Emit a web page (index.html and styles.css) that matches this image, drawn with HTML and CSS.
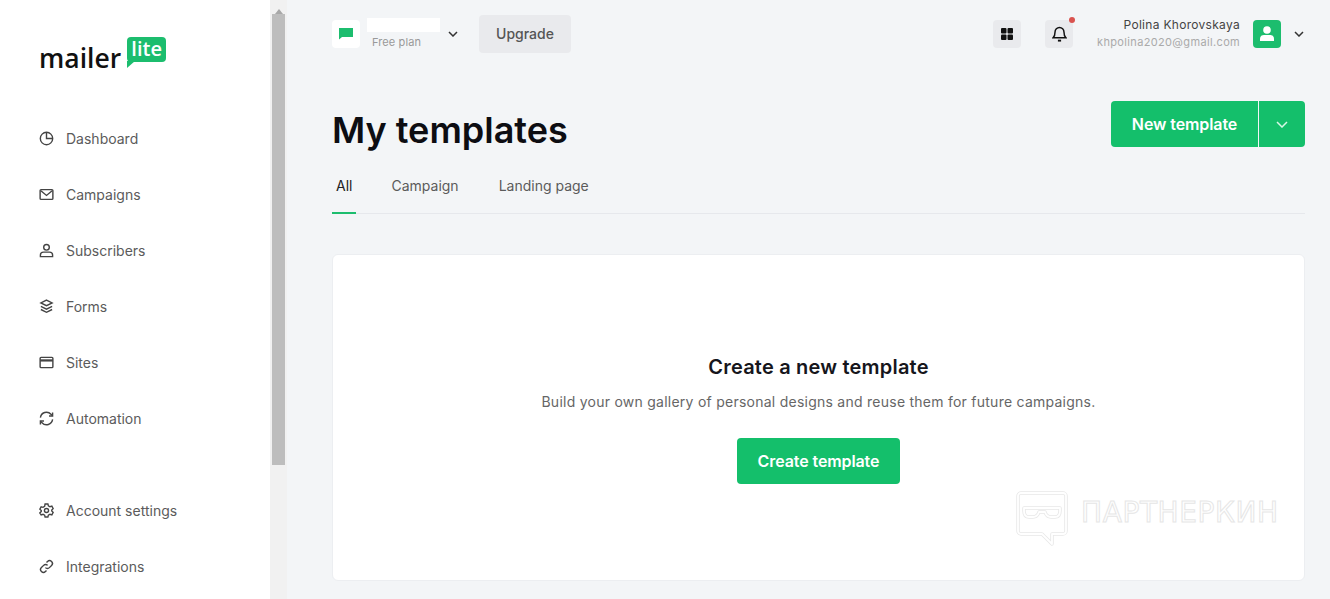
FILE: index.html
```html
<!DOCTYPE html>
<html lang="en">
<head>
    <meta charset="UTF-8">
    <meta name="viewport" content="width=device-width, initial-scale=1.0">
    <title>MailerLite - My templates</title>
    <link rel="stylesheet" href="styles.css">
</head>
<body>

    <!-- Sidebar -->
    <aside class="sidebar">
        <div class="logo">
            <span class="logo-word">mailer</span>
            <span class="logo-badge">lite<svg class="logo-tail" width="8" height="7" viewBox="0 0 8 7"><path d="M0 0h8L0 7z" fill="#1cbd6e"/></svg></span>
        </div>
        <nav class="side-nav">
            <a href="#"><svg class="nav-icon" viewBox="0 0 16 16"><circle cx="8" cy="8" r="6.600"/><path d="M8 1.400V8h6.600"/></svg>Dashboard</a>
            <a href="#"><svg class="nav-icon" viewBox="0 0 16 16"><rect x="1.200" y="2.800" width="13.600" height="10.400" rx="1"/><path d="M2 4l6 5 6-5"/></svg>Campaigns</a>
            <a href="#"><svg class="nav-icon" viewBox="0 0 16 16"><circle cx="8" cy="4.600" r="3"/><path d="M1.500 14.500v-1.800c0-2 1.800-3 3.300-3h6.400c1.500 0 3.300 1 3.300 3v1.800z"/></svg>Subscribers</a>
            <a href="#"><svg class="nav-icon" viewBox="0 0 16 16"><path d="M8 1.200l6 3-6 3-6-3z"/><path d="M2 7.800l6 3 6-3"/><path d="M2 11.200l6 3 6-3"/></svg>Forms</a>
            <a href="#"><svg class="nav-icon" viewBox="0 0 16 16"><rect x="1.200" y="2.500" width="13.600" height="11" rx="1"/><path d="M1.200 5.800h13.600" stroke-width="2.400"/></svg>Sites</a>
            <a class="nav-last" href="#"><svg class="nav-icon" viewBox="0 0 16 16"><path d="M1.500 7A6.500 6.500 0 0 1 12.800 3.500L14.500 5.200"/><path d="M14.500 1.500v3.800h-3.800"/><path d="M14.500 9A6.500 6.500 0 0 1 3.200 12.500L1.500 10.800"/><path d="M1.500 14.500v-3.800h3.800"/></svg>Automation</a>
            <a href="#"><svg class="nav-icon" viewBox="0 0 16 16"><path d="M6.500 1h3l.5 2 1.700 1 2-.6 1.400 2.600-1.500 1.500v1l1.500 1.500-1.400 2.600-2-.6-1.700 1-.5 2h-3l-.5-2-1.700-1-2 .6L.9 10.600l1.500-1.500v-1L.9 6.600l1.400-2.600 2 .6 1.700-1z"/><circle cx="8" cy="8" r="2.200"/></svg>Account settings</a>
            <a href="#"><svg class="nav-icon" viewBox="0 0 16 16"><path d="M6.800 9.200a3 3 0 0 0 4.300 0l2.300-2.300a3 3 0 0 0-4.300-4.300L8 3.700"/><path d="M9.200 6.800a3 3 0 0 0-4.300 0L2.600 9.100a3 3 0 0 0 4.300 4.300L8 12.300"/></svg>Integrations</a>
        </nav>
    </aside>

    <!-- Scrollbar -->
    <div class="scroll-track">
        <div class="scroll-arrow"></div>
        <div class="scroll-thumb"></div>
    </div>

    <!-- Main -->
    <main class="main">
        <header class="topbar">
            <div class="workspace">
                <div class="square-btn white-btn">
                    <svg width="14" height="13" viewBox="0 0 14 13"><path d="M0 1h14v9H3l-3 2.500z" fill="#1cbd6e"/></svg>
                </div>
                <div class="workspace-info">
                    <div class="workspace-name"></div>
                    <div class="workspace-plan">Free plan</div>
                </div>
                <svg class="chevron" width="10" height="6" viewBox="0 0 10 6"><path d="M1 1l4 4 4-4"/></svg>
            </div>
            <button class="upgrade-btn">Upgrade</button>
            <div class="top-right">
                <div class="square-btn">
                    <svg width="14" height="14" viewBox="0 0 14 14" fill="#111"><rect x="1" y="1" width="5.500" height="5.500" rx="1"/><rect x="7.500" y="1" width="5.500" height="5.500" rx="1"/><rect x="1" y="7.500" width="5.500" height="5.500" rx="1"/><rect x="7.500" y="7.500" width="5.500" height="5.500" rx="1"/></svg>
                </div>
                <div class="square-btn bell-btn">
                    <svg class="bell" width="15" height="17" viewBox="0 0 14 16"><path d="M1 12h12c-1.200-1.200-1.800-2.500-1.800-5.500a4.200 4.200 0 0 0-8.400 0C2.800 9.500 2.200 10.800 1 12z"/><path d="M5.500 14.700h3" stroke-width="1.800"/></svg>
                    <span class="bell-dot"></span>
                </div>
                <div class="user">
                    <div class="user-name">Polina Khorovskaya</div>
                    <div class="user-mail">khpolina2020@gmail.com</div>
                </div>
                <div class="square-btn avatar">
                    <svg width="16" height="15" viewBox="0 0 16 15" fill="#fff"><circle cx="8" cy="4" r="3.800"/><path d="M1 15v-2.500C1 10 3 9 5 9h6c2 0 4 1 4 3.500V15z"/></svg>
                </div>
                <svg class="chevron" width="10" height="6" viewBox="0 0 10 6"><path d="M1 1l4 4 4-4"/></svg>
            </div>
        </header>

        <div class="title-row">
            <h1>My templates</h1>
            <div class="split-btn">
                <button class="split-main">New template</button>
                <button class="split-arrow"><svg width="12" height="7" viewBox="0 0 12 7"><path d="M1 1l5 5 5-5"/></svg></button>
            </div>
        </div>

        <div class="tabs">
            <a class="tab active" href="#">All</a>
            <a class="tab" href="#">Campaign</a>
            <a class="tab" href="#">Landing page</a>
        </div>

        <section class="card">
            <h2>Create a new template</h2>
            <p>Build your own gallery of personal designs and reuse them for future campaigns.</p>
            <button class="create-btn">Create template</button>

            <!-- Watermark over the card -->
            <div class="watermark">
                <svg width="52" height="56" viewBox="0 0 52 56">
                    <path class="wm-thick" d="M5 2h42a3 3 0 0 1 3 3v35a3 3 0 0 1-3 3H36v10L26 43H5a3 3 0 0 1-3-3V5a3 3 0 0 1 3-3z"/>
                    <path class="wm-thick" d="M8 17h36v3c0 4-2 6-5 6h-4c-3 0-5-2-6-5h-6c-1 3-3 5-6 5h-4c-3 0-5-2-5-6z"/>
                    <path class="wm-thin" d="M5 2h42a3 3 0 0 1 3 3v35a3 3 0 0 1-3 3H36v10L26 43H5a3 3 0 0 1-3-3V5a3 3 0 0 1 3-3z"/>
                    <path class="wm-thin" d="M8 17h36v3c0 4-2 6-5 6h-4c-3 0-5-2-6-5h-6c-1 3-3 5-6 5h-4c-3 0-5-2-5-6z"/>
                </svg>
                <span class="watermark-text">ПАРТНЕРКИН</span>
            </div>
        </section>
    </main>

</body>
</html>
```

FILE: styles.css
```css
* { box-sizing: border-box; }
html, body { height: 100%; }
body { margin: 0; height: 599px; overflow: hidden; display: flex; background: #f3f5f7; font-family: Inter, "Liberation Sans", sans-serif; color: #555; }
a { text-decoration: none; color: inherit; }
button { font-family: inherit; border: none; cursor: pointer; }

/* Sidebar */
.sidebar { width: 270px; flex-shrink: 0; height: 100%; background: #fff; padding: 37px 0 0 39px; }
.logo { display: flex; align-items: flex-start; height: 73px; }
.logo-word { font-family: "Open Sans", sans-serif; font-size: 26.500px; font-weight: 600; line-height: 30px; margin-top: 6px; color: #111; }
.logo-badge { position: relative; margin-left: 6px; width: 39px; height: 25px; background: #1cbd6e; border-radius: 4px; color: #fff; font-family: "Open Sans", sans-serif; font-size: 20px; font-weight: 600; line-height: 24px; text-align: center; }
.logo-tail { position: absolute; left: 0; top: 24px; }
.side-nav { display: flex; flex-direction: column; }
.side-nav a { display: flex; align-items: center; gap: 12px; height: 56px; font-size: 14px; color: #5b5b5b; }
.side-nav .nav-last { margin-bottom: 36px; }
.nav-icon { width: 15px; height: 15px; flex-shrink: 0; fill: none; stroke: #444; stroke-width: 1.5; }

/* Scrollbar */
.scroll-track { width: 17px; flex-shrink: 0; height: 100%; background: #f1f1f1; padding: 0 2px; }
.scroll-arrow { height: 14px; width: 0; margin: 0 auto; border-left: 4px solid transparent; border-right: 4px solid transparent; border-bottom: 5px solid #a8a8a8; border-top: 4px solid transparent; }
.scroll-thumb { height: 451px; background: #bdbdbd; }

/* Main */
.main { flex: 1; min-width: 0; padding: 0 25px 0 45px; }
.topbar { display: flex; align-items: center; height: 67px; }
.workspace { display: flex; align-items: center; }
.square-btn { width: 28px; height: 28px; border-radius: 4px; background: #e9eaed; display: flex; align-items: center; justify-content: center; position: relative; }
.white-btn { background: #fff; }
.workspace-info { margin-left: 7px; width: 81px; }
.workspace-name { width: 73px; height: 14px; background: #fff; margin-bottom: 3px; }
.workspace-plan { font-size: 11px; line-height: 14px; color: #999; padding-left: 5px; letter-spacing: 0.1px; }
.chevron { fill: none; stroke: #333; stroke-width: 1.5; }
.upgrade-btn { margin-left: 21px; width: 92px; height: 38px; background: #e9eaed; border-radius: 4px; font-size: 14px; font-weight: 500; color: #555; }
.top-right { margin-left: auto; display: flex; align-items: center; }
.bell-btn { margin-left: 24px; }
.bell { fill: none; stroke: #111; stroke-width: 1.4; }
.bell-dot { position: absolute; top: -3px; right: -2px; width: 6px; height: 6px; border-radius: 50%; background: #d9534f; }
.user { margin-left: 24px; text-align: right; width: 143px; }
.user-name { font-size: 12px; line-height: 16px; color: #444; font-weight: 400; letter-spacing: 0.3px; }
.user-mail { font-size: 11px; line-height: 16px; color: #aaa; letter-spacing: 0.35px; margin-top: 1px; }
.avatar { margin-left: 13px; background: #1cbd6e; }
.top-right .chevron { margin-left: 13px; margin-right: 1px; }

.title-row { display: flex; justify-content: space-between; align-items: flex-start; padding-top: 34px; height: 98px; }
h1 { margin: 6px 0 0; font-size: 36px; line-height: 46px; font-weight: 600; color: #0d0d12; }
.split-btn { display: flex; height: 46px; color: #fff; }
.split-main { width: 147px; background: #14bf6b; color: #fff; font-size: 16px; font-weight: 600; letter-spacing: -0.1px; border-radius: 4px 0 0 4px; }
.split-arrow { width: 46px; margin-left: 1px; background: #14bf6b; border-radius: 0 4px 4px 0; display: flex; align-items: center; justify-content: center; }
.split-arrow svg { fill: none; stroke: #d8f7e6; stroke-width: 1.5; }

/* Tabs */
.tabs { display: flex; gap: 32px; height: 49px; border-bottom: 1px solid #e6e8ec; }
.tab { padding: 0 4px; height: 49px; line-height: 42px; font-size: 14px; color: #5b5b5b; }
.tab.active { color: #222; border-bottom: 2px solid #1cbd6e; margin-right: -1px; }

/* Card */
.card { position: relative; margin-top: 40px; height: 327px; background: #fff; border: 1px solid #eceef1; border-radius: 6px; display: flex; flex-direction: column; align-items: center; padding-top: 98px; }
.card h2 { margin: 0; font-size: 20px; line-height: 28px; font-weight: 600; color: #16161c; letter-spacing: 0.2px; }
.card p { margin: 10px 0 0; font-size: 14px; line-height: 22px; color: #666; letter-spacing: 0.25px; }
.create-btn { margin-top: 25px; width: 163px; height: 46px; background: #14bf6b; border-radius: 4px; color: #fff; font-size: 16px; font-weight: 600; letter-spacing: -0.1px; }

.watermark { position: absolute; left: 683px; top: 236px; display: flex; gap: 13px; align-items: flex-start; }
.watermark svg { fill: none; }
.wm-thick { stroke: #e8e8e8; stroke-width: 3.5; stroke-linejoin: round; }
.wm-thin { stroke: #fff; stroke-width: 1.8; stroke-linejoin: round; }
.watermark-text { margin-top: 5px; font-family: "DejaVu Sans", sans-serif; font-size: 28px; line-height: 34px; font-weight: 400; letter-spacing: 0.6px; color: transparent; -webkit-text-stroke: 1px #e6e6e6; }
```
